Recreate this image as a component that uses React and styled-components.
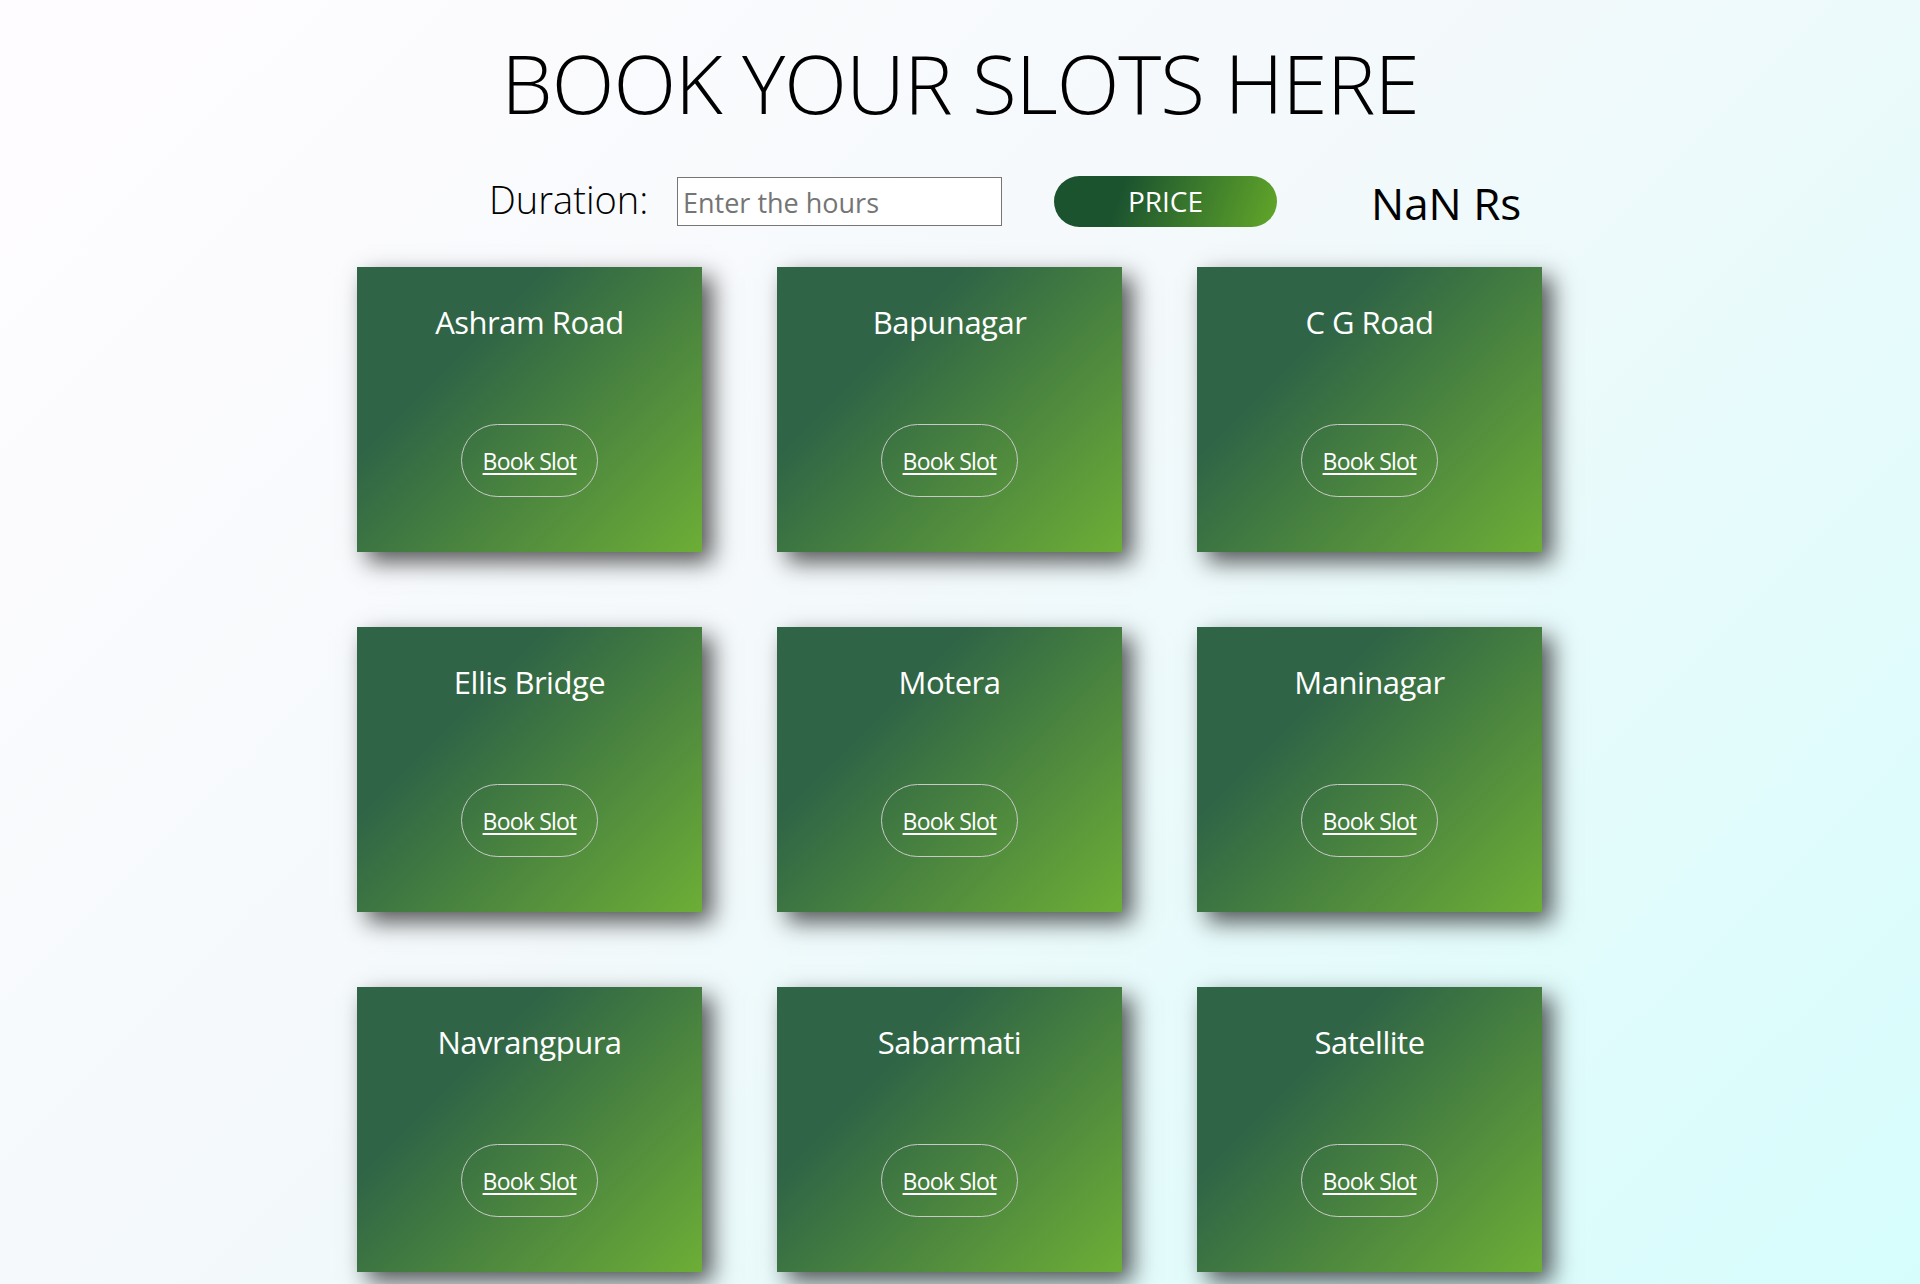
import React, { useState } from 'react';
import styled, { createGlobalStyle } from 'styled-components';

const GlobalStyle = createGlobalStyle`
  html, body {
    margin: 0;
    padding: 0;
  }
  body {
    font-family: 'Open Sans', 'Liberation Sans', sans-serif;
    background: linear-gradient(135deg, #fffcff 0%, #f4f9fb 45%, #d6fdfc 100%);
    background-attachment: fixed;
    min-height: 100vh;
  }
`;

const Page = styled.div`
  width: 100%;
  padding: 30px 0 60px;
  box-sizing: border-box;
`;

const Title = styled.h1`
  margin: 0;
  text-align: center;
  font-size: 82px;
  font-weight: 300;
  line-height: 104px;
  color: #000;
  letter-spacing: -1px;
`;

const Controls = styled.div`
  display: flex;
  align-items: center;
  padding-left: 489px;
  margin-top: 41px;
  height: 52px;
`;

const Label = styled.label`
  font-size: 38px;
  font-weight: 300;
  color: #000;
  width: 188px;
  flex-shrink: 0;
  margin-top: -4px;
`;

const HoursInput = styled.input`
  width: 325px;
  height: 49px;
  box-sizing: border-box;
  border: 1px solid #767676;
  background: #fff;
  padding: 2px 5px 0;
  font-family: 'Open Sans', 'Liberation Sans', sans-serif;
  font-size: 27px;
  outline: none;
  &::placeholder {
    color: #757575;
  }
`;

const PriceButton = styled.button`
  margin-left: 52px;
  width: 223px;
  height: 51px;
  border: none;
  border-radius: 26px;
  background: linear-gradient(110deg, #1b532f 30%, #62a729 100%);
  color: #fff;
  font-family: 'Open Sans', 'Liberation Sans', sans-serif;
  font-size: 28px;
  cursor: pointer;
`;

const Result = styled.span`
  margin-left: 94px;
  font-size: 44px;
  color: #000;
  margin-top: 4px;
`;

const Grid = styled.div`
  display: grid;
  grid-template-columns: repeat(3, 345px);
  grid-auto-rows: 285px;
  column-gap: 75px;
  row-gap: 75px;
  padding-left: 357px;
  margin-top: 40px;
`;

const Card = styled.div`
  display: flex;
  flex-direction: column;
  align-items: center;
  background: linear-gradient(135deg, #2f6446 30%, #6dae36 100%);
  box-shadow: 10px 10px 22px rgba(15, 15, 15, 0.7);
`;

const CardTitle = styled.h3`
  margin: 33px 0 0;
  font-size: 31px;
  font-weight: 400;
  line-height: 44px;
  color: #fff;
  letter-spacing: -0.5px;
`;

const BookButton = styled.a`
  margin-top: 80px;
  width: 137px;
  height: 73px;
  box-sizing: border-box;
  border: 1px solid #c9c9c9;
  border-radius: 37px;
  display: flex;
  align-items: center;
  justify-content: center;
  color: #fff;
  font-size: 23px;
  text-decoration: underline;
  text-underline-offset: 3px;
  letter-spacing: -0.8px;
  cursor: pointer;
`;

const places = [
  'Ashram Road',
  'Bapunagar',
  'C G Road',
  'Ellis Bridge',
  'Motera',
  'Maninagar',
  'Navrangpura',
  'Sabarmati',
  'Satellite',
];

const App = () => {
  const [hours, setHours] = useState('');
  const [price, setPrice] = useState(NaN);

  return (
    <Page>
      <GlobalStyle />
      <Title>BOOK YOUR SLOTS HERE</Title>
      <Controls>
        <Label htmlFor="hours">Duration:</Label>
        <HoursInput
          id="hours"
          type="text"
          value={hours}
          onChange={(e) => setHours(e.target.value)}
          placeholder="Enter the hours"
        />
        <PriceButton onClick={() => setPrice(parseInt(hours) * 20)}>PRICE</PriceButton>
        <Result>{String(price)} Rs</Result>
      </Controls>
      <Grid>
        {places.map((p) => (
          <Card key={p}>
            <CardTitle>{p}</CardTitle>
            <BookButton>Book Slot</BookButton>
          </Card>
        ))}
      </Grid>
    </Page>
  );
};

export default App;
